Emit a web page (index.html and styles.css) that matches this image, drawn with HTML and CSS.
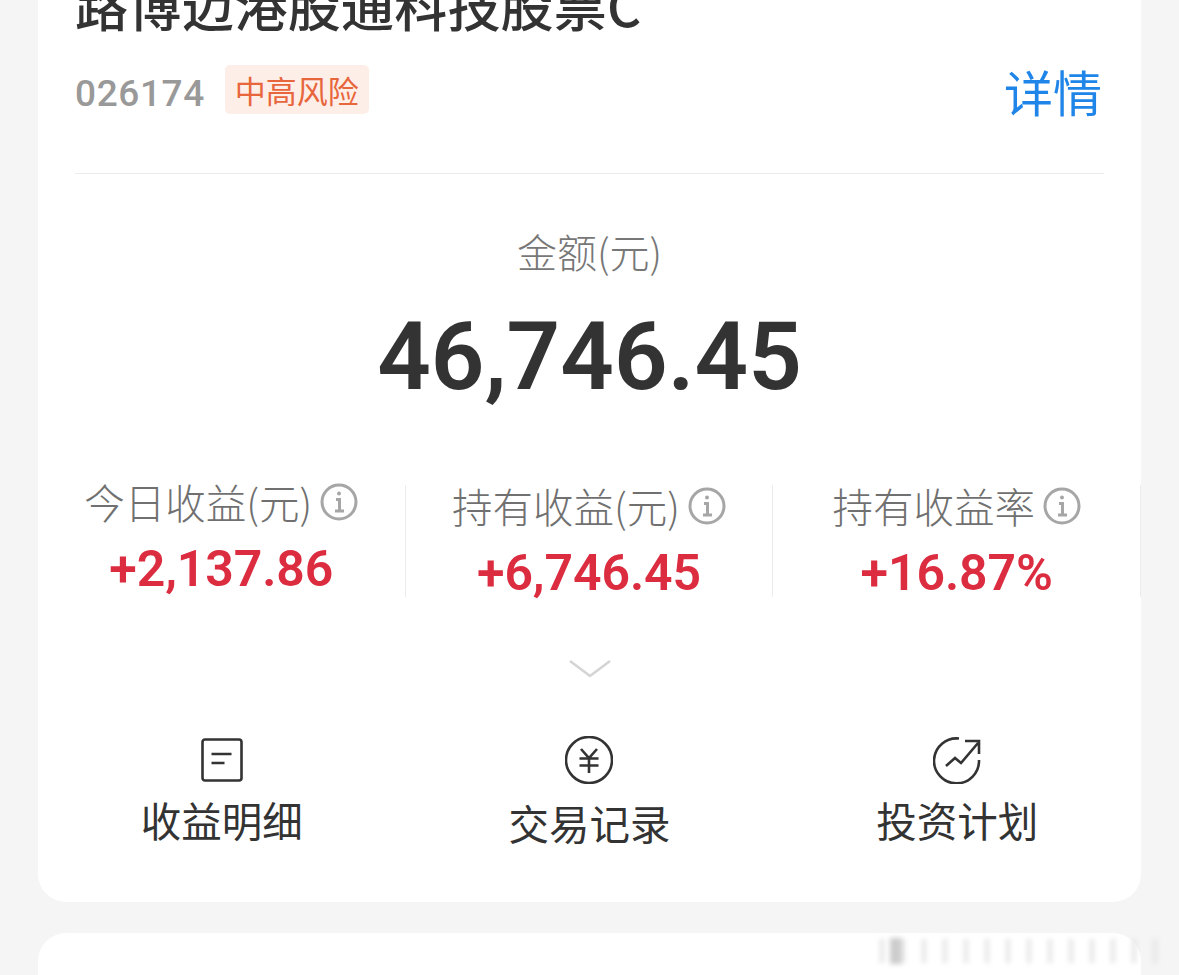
FILE: index.html
```html
<!DOCTYPE html>
<html lang="zh-CN">
<head>
    <meta charset="UTF-8">
    <meta name="viewport" content="width=device-width, initial-scale=1.0">
    <title>路博迈港股通科技股票C</title>

    <link rel="stylesheet" href="styles.css">
</head>
<body>

    <!-- Fund Card -->
    <section class="card">
        <h1 class="fund-name">路博迈港股通科技股票C</h1>

        <div class="fund-meta">
            <span class="fund-code">026174</span>
            <span class="risk-tag">中高风险</span>
            <a class="detail-link">详情</a>
        </div>

        <div class="amount">
            <div class="amount-label">金额(元)</div>
            <div class="amount-value">46,746.45</div>
        </div>

        <!-- Earnings -->
        <div class="stats">
            <div class="stat stat-raised">
                <div class="stat-label">今日收益(元)
                    <svg class="info" viewBox="0 0 38 38"><circle cx="19" cy="19" r="17" /><path d="M16 16.5h3.5V28M15 28h9" /><circle class="dot" cx="19" cy="10.5" r="2" /></svg>
                </div>
                <div class="stat-value">+2,137.86</div>
            </div>
            <div class="stat">
                <div class="stat-label">持有收益(元)
                    <svg class="info" viewBox="0 0 38 38"><circle cx="19" cy="19" r="17" /><path d="M16 16.5h3.5V28M15 28h9" /><circle class="dot" cx="19" cy="10.5" r="2" /></svg>
                </div>
                <div class="stat-value">+6,746.45</div>
            </div>
            <div class="stat">
                <div class="stat-label">持有收益率
                    <svg class="info" viewBox="0 0 38 38"><circle cx="19" cy="19" r="17" /><path d="M16 16.5h3.5V28M15 28h9" /><circle class="dot" cx="19" cy="10.5" r="2" /></svg>
                </div>
                <div class="stat-value">+16.87%</div>
            </div>
        </div>

        <svg class="chevron" viewBox="0 0 42 18"><path d="M1 1l20 15L41 1" /></svg>

        <!-- Actions -->
        <div class="actions">
            <div class="action">
                <svg class="action-icon" viewBox="0 0 48 48"><rect x="4.5" y="3.5" width="39" height="41" rx="2.5" /><path d="M13.500 18h20M13.500 27h13" /></svg>
                <span class="action-label">收益明细</span>
            </div>
            <div class="action action-low">
                <svg class="action-icon" viewBox="0 0 48 48"><circle cx="24" cy="24" r="23" /><path d="M16 13l8 9 8-9M14.500 22.500h19M14.500 29.500h19M24 22v15" /></svg>
                <span class="action-label">交易记录</span>
            </div>
            <div class="action">
                <svg class="action-icon" viewBox="0 0 48 48"><path d="M26 2.500A22.500 22.500 0 1 0 46 24" /><path d="M13 30l9-8 6 5 17-20M32 5h14v13" /></svg>
                <span class="action-label">投资计划</span>
            </div>
        </div>
    </section>

    <!-- Next card, only its top edge is visible -->
    <section class="card card-next"></section>

    <!-- Blurred watermark -->
    <div class="watermark">
        <span class="watermark-mark"></span>
        <span class="watermark-bars"></span>
    </div>

</body>
</html>
```

FILE: styles.css
```css
body {
    background-color: #f5f5f5;
    color: #333;
    font-family: 'Noto Sans CJK SC', 'Roboto', sans-serif;
    margin: 0;
    height: 975px;
    overflow: hidden;
    position: relative;
}

/* Cards */
.card {
    background-color: #fff;
    border-radius: 28px;
    margin: -40px 38px 0;
    padding: 5px 37px 0;
    height: 942px;
    box-sizing: border-box;
}

.card-next {
    margin-top: 31px;
    height: 42px;
    border-radius: 28px 28px 0 0;
}

/* Heading */
.fund-name {
    margin: 0;
    font-size: 53px;
    line-height: 78px;
    font-weight: 500;
    letter-spacing: 0.2px;
    white-space: nowrap;
}

.fund-meta {
    display: flex;
    align-items: center;
    height: 68px;
    margin-top: 10px;
    border-bottom: 1px solid #ececec;
    padding-bottom: 52px;
}

.fund-code {
    font-family: 'Roboto', sans-serif;
    font-size: 37px;
    font-weight: 500;
    color: #999;
    letter-spacing: 0.6px;
    margin-top: 12px;
}

.risk-tag {
    background-color: #fdeee8;
    color: #e8663c;
    font-size: 31px;
    line-height: 49px;
    padding: 0 10px;
    border-radius: 5px;
    margin-left: 20px;
    margin-top: 4px;
}

.detail-link {
    margin-left: auto;
    color: #1f85e8;
    font-size: 49px;
    margin-top: 6px;
    margin-right: 2px;
}

/* Amount */
.amount {
    text-align: center;
    margin-left: -37px;
    margin-right: -37px;
}

.amount-label {
    color: #777;
    font-size: 40px;
    font-weight: 300;
    line-height: 56px;
    margin-top: 49px;
}

.amount-value {
    font-family: 'Roboto', sans-serif;
    font-size: 94px;
    font-weight: 600;
    line-height: 112px;
    margin-top: 22px;
}

/* Stats */
.stats {
    display: grid;
    grid-template-columns: repeat(3, 1fr);
    margin: 72px -37px 0;
}

.stat {
    border-right: 1px solid #ececec;
    height: 112px;
    text-align: center;
}

.stat-label {
    color: #707070;
    font-size: 40.5px;
    font-weight: 300;
    line-height: 50px;
    display: flex;
    justify-content: center;
    align-items: center;
    gap: 8px;
    margin-top: -4px;
}

.stat-value {
    font-family: 'Roboto', sans-serif;
    color: #dc2c40;
    font-size: 50px;
    font-weight: 600;
    line-height: 58px;
    margin-top: 13px;
    letter-spacing: -0.1px;
}

.stat-raised .stat-label,
.stat-raised .stat-value {
    position: relative;
    top: -4px;
}

.info {
    width: 38px;
    height: 38px;
    fill: none;
    stroke: #a6a6a6;
    stroke-width: 3;
}

.info .dot {
    fill: #a6a6a6;
    stroke: none;
}

.chevron {
    display: block;
    width: 42px;
    height: 18px;
    margin: 63px auto 0;
    fill: none;
    stroke: #d4d4d4;
    stroke-width: 2.5;
}

/* Actions */
.actions {
    display: grid;
    grid-template-columns: repeat(3, 1fr);
    margin: 58px -37px 0;
}

.action {
    display: flex;
    flex-direction: column;
    align-items: center;
}

.action-icon {
    width: 48px;
    height: 48px;
    fill: none;
    stroke: #333;
    stroke-width: 2.6;
}

.action-label {
    font-size: 40.5px;
    line-height: 58px;
    margin-top: 7px;
    color: #333;
}

.action-low .action-label {
    margin-top: 10px;
}

/* Watermark */
.watermark {
    position: absolute;
    left: 880px;
    top: 936px;
    width: 290px;
    height: 30px;
    filter: blur(2.5px);
}

.watermark-mark {
    position: absolute;
    left: 10px;
    top: 2px;
    width: 12px;
    height: 26px;
    background-color: #ccc;
}

.watermark-bars {
    position: absolute;
    left: 0;
    top: 3px;
    width: 290px;
    height: 24px;
    background: repeating-linear-gradient(90deg, #e4e4e4 0 4px, transparent 4px 21px);
}
```
